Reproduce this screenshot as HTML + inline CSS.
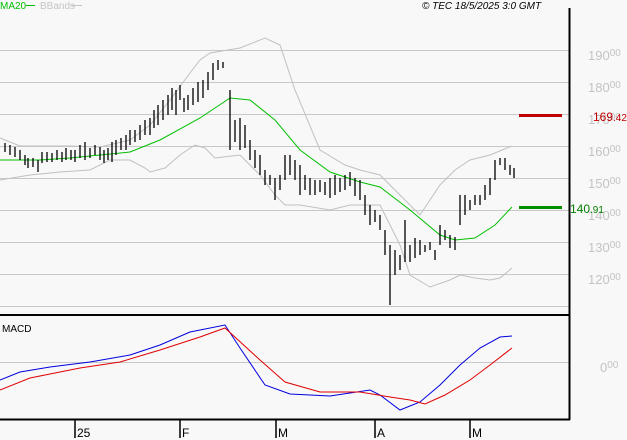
<!DOCTYPE html>
<html><head><meta charset="utf-8"><style>
html,body{margin:0;padding:0;background:#f8f8f8;}
svg{display:block;font-family:"Liberation Sans",sans-serif;}
</style></head><body>
<svg width="627" height="440" viewBox="0 0 627 440" xmlns="http://www.w3.org/2000/svg">
<rect width="627" height="440" fill="#f8f8f8"/>
<g stroke="#c8c8c8" stroke-width="1">
<path d="M0 50.5H569M0 82.5H569M0 114.5H569M0 146.5H569M0 178.5H569M0 210.5H569M0 242.5H569M0 274.5H569M0 306.5H569M0 362.5H569"/>
</g>
<g fill="#c4c4c4" font-size="13">
<text x="588" y="60">190<tspan font-size="10" dy="-4">00</tspan></text>
<text x="588" y="92">180<tspan font-size="10" dy="-4">00</tspan></text>
<text x="588" y="124">170<tspan font-size="10" dy="-4">00</tspan></text>
<text x="588" y="156">160<tspan font-size="10" dy="-4">00</tspan></text>
<text x="588" y="188">150<tspan font-size="10" dy="-4">00</tspan></text>
<text x="588" y="220">140<tspan font-size="10" dy="-4">00</tspan></text>
<text x="588" y="252">130<tspan font-size="10" dy="-4">00</tspan></text>
<text x="588" y="284">120<tspan font-size="10" dy="-4">00</tspan></text>
<text x="600" y="372">0<tspan font-size="10" dy="-4">00</tspan></text>
</g>
<polyline fill="none" stroke="#c0c0c0" points="0,138 20,146 40,146 70,146 100,147 130,140 150,125 170,100 190,73 200,60 210,53 240,48 265,38 280,45 295,90 320,150 345,165 360,170 380,175 400,195 420,215 440,185 455,170 470,160 490,155 512,146"/>
<polyline fill="none" stroke="#c0c0c0" points="0,180 30,175 60,172 90,170 110,160 130,160 145,168 150,172 165,168 180,155 195,145 205,148 215,158 240,155 260,175 275,195 285,205 300,205 330,210 350,205 380,205 400,245 410,275 430,287 450,280 460,275 475,278 490,280 500,278 512,268"/>
<polyline fill="none" stroke="#00c000" points="0,160 40,160 70,158 100,155 130,152 160,140 200,118 230,98 250,100 275,120 300,150 330,172 360,182 380,187 410,210 440,235 455,240 475,238 495,225 512,207"/>
<path fill="none" stroke="#000" stroke-width="1.3" d="M5 143V152M10 145V155M15 147V157M20 150V160M25 155V165M28 158V168M33 158V167M38 160V172M42 152V163M47 152V162M52 153V162M57 150V160M62 152V162M66 148V160M71 150V160M75 150V162M80 145V158M85 142V160M90 148V158M95 145V155M100 147V160M104 150V163M108 148V160M112 142V162M116 140V155M121 138V150M126 135V150M130 130V145M135 130V142M140 125V140M145 120V135M150 118V135M154 110V128M158 105V125M163 100V120M168 95V115M172 88V110M176 90V115M180 85V100M184 98V112M188 95V110M193 88V105M198 82V102M203 80V98M208 72V90M213 63V80M218 60V70M223 62V68M230 90V150M235 120V142M240 118V150M245 125V148M250 140V160M255 150V168M260 155V175M265 170V185M270 175V185M275 178V200M280 175V190M285 155V180M290 155V175M295 160V180M300 165V195M305 175V190M310 178V195M315 180V195M320 180V192M325 182V195M330 178V198M335 175V195M340 178V192M345 175V190M350 172V186M355 178V196M360 180V200M365 195V215M370 205V225M375 210V222M380 215V230M385 230V255M390 245V305M395 250V275M400 255V270M405 220V262M410 245V262M415 238V258M420 240V255M425 245V252M430 242V250M435 250V260M440 225V245M445 230V240M450 235V248M455 237V250M460 195V225M465 195V215M470 200V210M475 195V205M480 195V205M485 185V200M490 178V195M495 160V180M500 158V165M505 158V170M510 165V175M514 168V178"/>
<rect x="519" y="114" width="43" height="3" fill="#c00000"/>
<rect x="519" y="206" width="43" height="3" fill="#009000"/>
<text x="593" y="121" fill="#c00000" font-size="12">169<tspan font-size="10">.42</tspan></text>
<text x="570" y="213" fill="#008000" font-size="12">140<tspan font-size="10">.91</tspan></text>
<polyline fill="none" stroke="#0000e0" points="0,380 20,372 50,367 90,362 130,355 160,345 190,332 225,325 240,348 265,385 290,394 330,396 370,390 380,395 400,410 420,402 440,385 460,365 480,348 500,337 512,336"/>
<polyline fill="none" stroke="#e00000" points="0,390 30,378 80,368 120,362 160,350 200,337 225,328 260,360 285,382 320,392 360,392 390,397 410,400 425,404 445,395 470,380 490,365 512,348"/>
<path stroke="#000" stroke-width="2" fill="none" d="M569.5 8V420M0 315H570M0 419.5H570"/>
<path stroke="#000" stroke-width="1.5" d="M75 419V438M180 419V438M276 419V438M375 419V438M470 419V438"/>
<g font-size="12" fill="#000">
<text x="77" y="437">25</text><text x="182" y="437">F</text><text x="278" y="437">M</text><text x="377" y="437">A</text><text x="472" y="437">M</text>
<text x="2" y="332" font-size="10">MACD</text>
<text x="422" y="9" font-size="10" font-style="italic">© TEC 18/5/2025 3:0 GMT</text>
</g>
<text x="0" y="9" font-size="10" fill="#00c000">MA20</text>
<path d="M26 5.5H35" stroke="#00c000"/>
<text x="40" y="9" font-size="10" fill="#c4c4c4">BBands</text>
<path d="M72 5.5H82" stroke="#c4c4c4"/>
</svg>
</body></html>
